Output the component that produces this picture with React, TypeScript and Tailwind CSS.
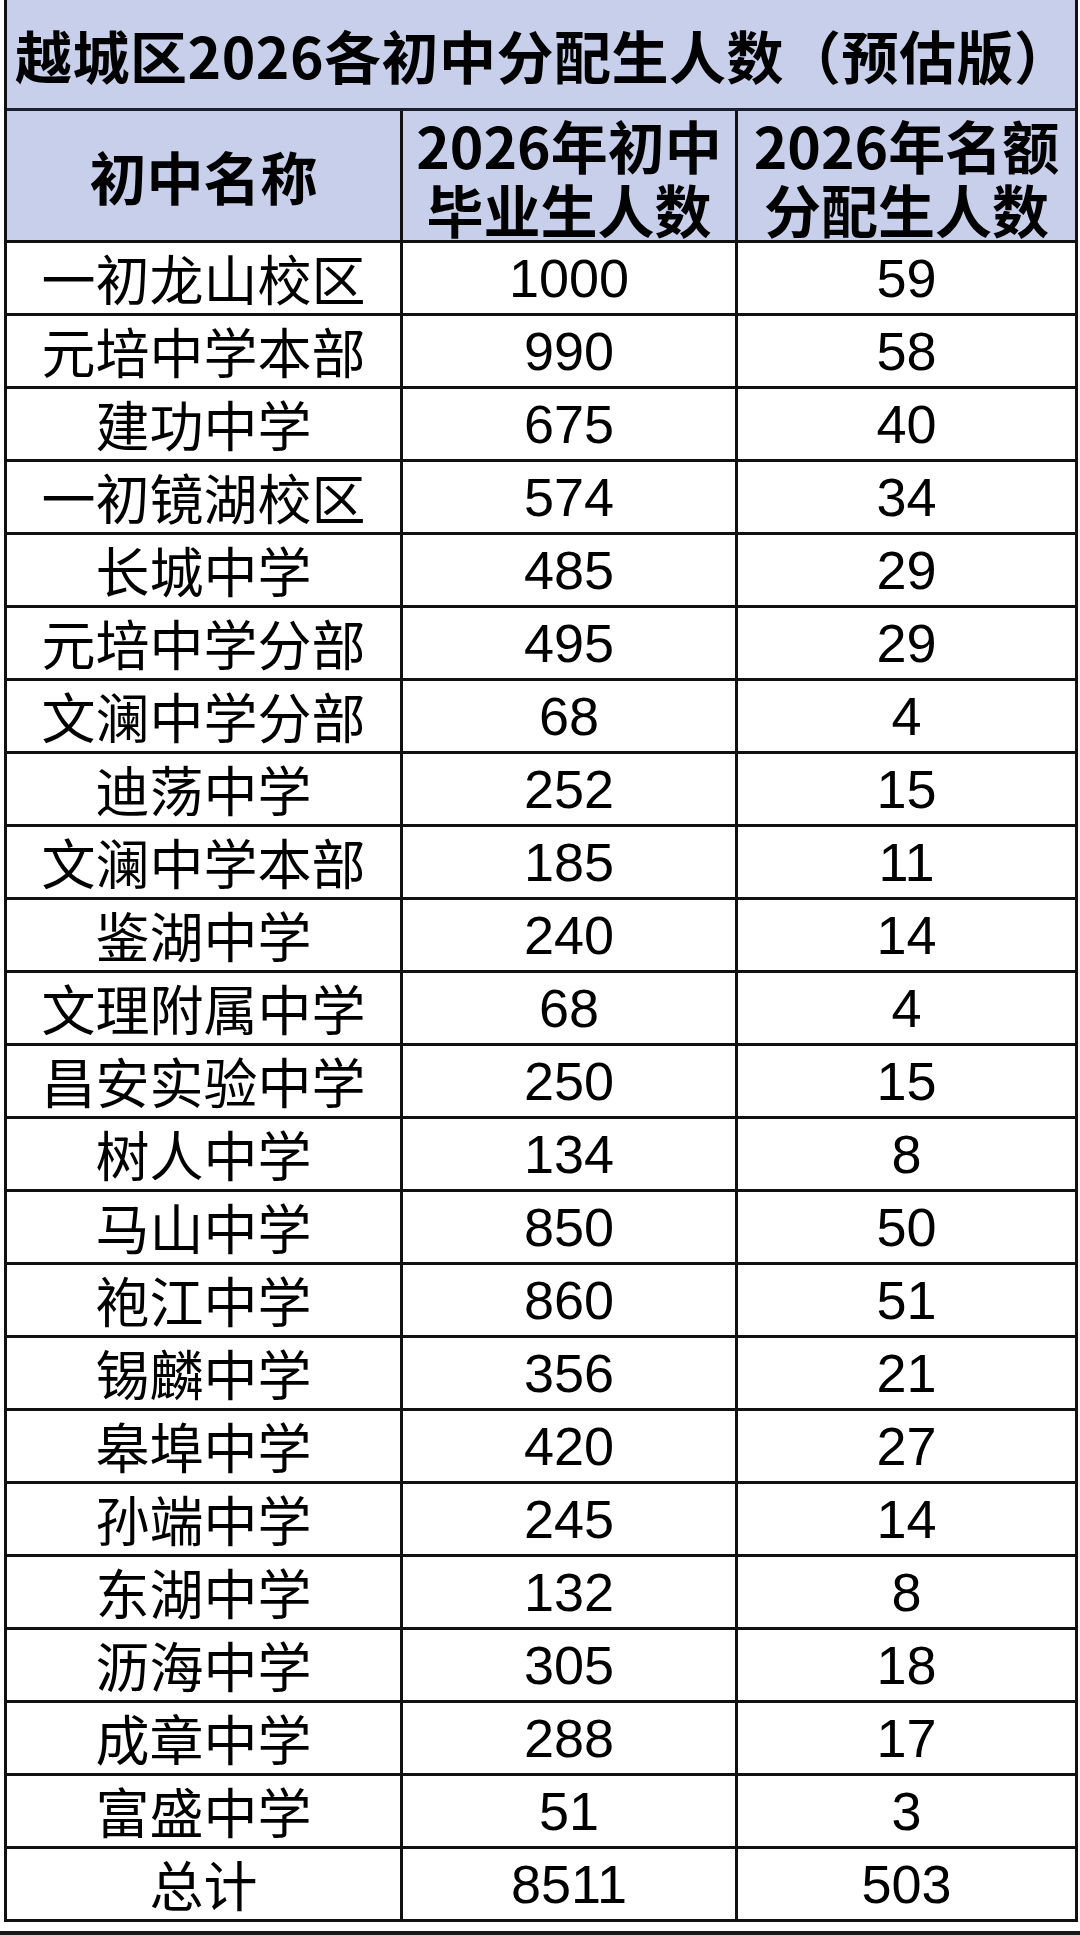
const rows: [string, string, string][] = [
  ["一初龙山校区", "1000", "59"],
  ["元培中学本部", "990", "58"],
  ["建功中学", "675", "40"],
  ["一初镜湖校区", "574", "34"],
  ["长城中学", "485", "29"],
  ["元培中学分部", "495", "29"],
  ["文澜中学分部", "68", "4"],
  ["迪荡中学", "252", "15"],
  ["文澜中学本部", "185", "11"],
  ["鉴湖中学", "240", "14"],
  ["文理附属中学", "68", "4"],
  ["昌安实验中学", "250", "15"],
  ["树人中学", "134", "8"],
  ["马山中学", "850", "50"],
  ["袍江中学", "860", "51"],
  ["锡麟中学", "356", "21"],
  ["皋埠中学", "420", "27"],
  ["孙端中学", "245", "14"],
  ["东湖中学", "132", "8"],
  ["沥海中学", "305", "18"],
  ["成章中学", "288", "17"],
  ["富盛中学", "51", "3"],
  ["总计", "8511", "503"],
];

const cjk = "font-['Noto_Sans_CJK_SC',sans-serif]";
const num = "font-['Liberation_Sans','Noto_Sans_CJK_SC',sans-serif]";

export default function App() {
  return (
    <div className="w-[1080px] h-[1935px] bg-white overflow-hidden text-black flex flex-col">
      <div className="ml-[4px] w-[1074px] border-x-[3px] border-[#111]">
        <div
          className={`h-[111px] bg-[#c7cfeb] border-b-[3px] border-[#1c1f2e] flex items-center pl-[8px] whitespace-nowrap text-[57px] font-bold leading-none tracking-[0.5px] ${cjk}`}
        >
          越城区2026各初中分配生人数（预估版）
        </div>
        <div className="h-[132px] bg-[#c7cfeb] border-b-[3px] border-[#111] grid grid-cols-[396px_335px_1fr]">
          <div className={`border-r-[3px] border-[#111] flex items-center justify-center text-[57px] font-bold ${cjk}`}>
            初中名称
          </div>
          <div className={`border-r-[3px] border-[#111] flex items-center justify-center text-center text-[57px] leading-[64px] font-bold ${cjk}`}>
            <p>
              2026年初中
              <br />
              毕业生人数
            </p>
          </div>
          <div className={`flex items-center justify-center text-center text-[57px] leading-[64px] font-bold ${cjk}`}>
            <p>
              2026年名额
              <br />
              分配生人数
            </p>
          </div>
        </div>
        {rows.map(([name, grads, quota]) => (
          <div
            key={name}
            className="h-[73px] border-b-[3px] border-[#111] grid grid-cols-[396px_335px_1fr]"
          >
            <div className={`border-r-[3px] border-[#111] flex items-center justify-center text-[54px] leading-none ${cjk}`}>
              {name}
            </div>
            <div className={`border-r-[3px] border-[#111] flex items-center justify-center text-[54px] leading-none ${num}`}>
              {grads}
            </div>
            <div className={`flex items-center justify-center text-[54px] leading-none ${num}`}>
              {quota}
            </div>
          </div>
        ))}
      </div>
      <div className="mt-auto h-[4px] bg-[#1a1a1a]" />
    </div>
  );
}
